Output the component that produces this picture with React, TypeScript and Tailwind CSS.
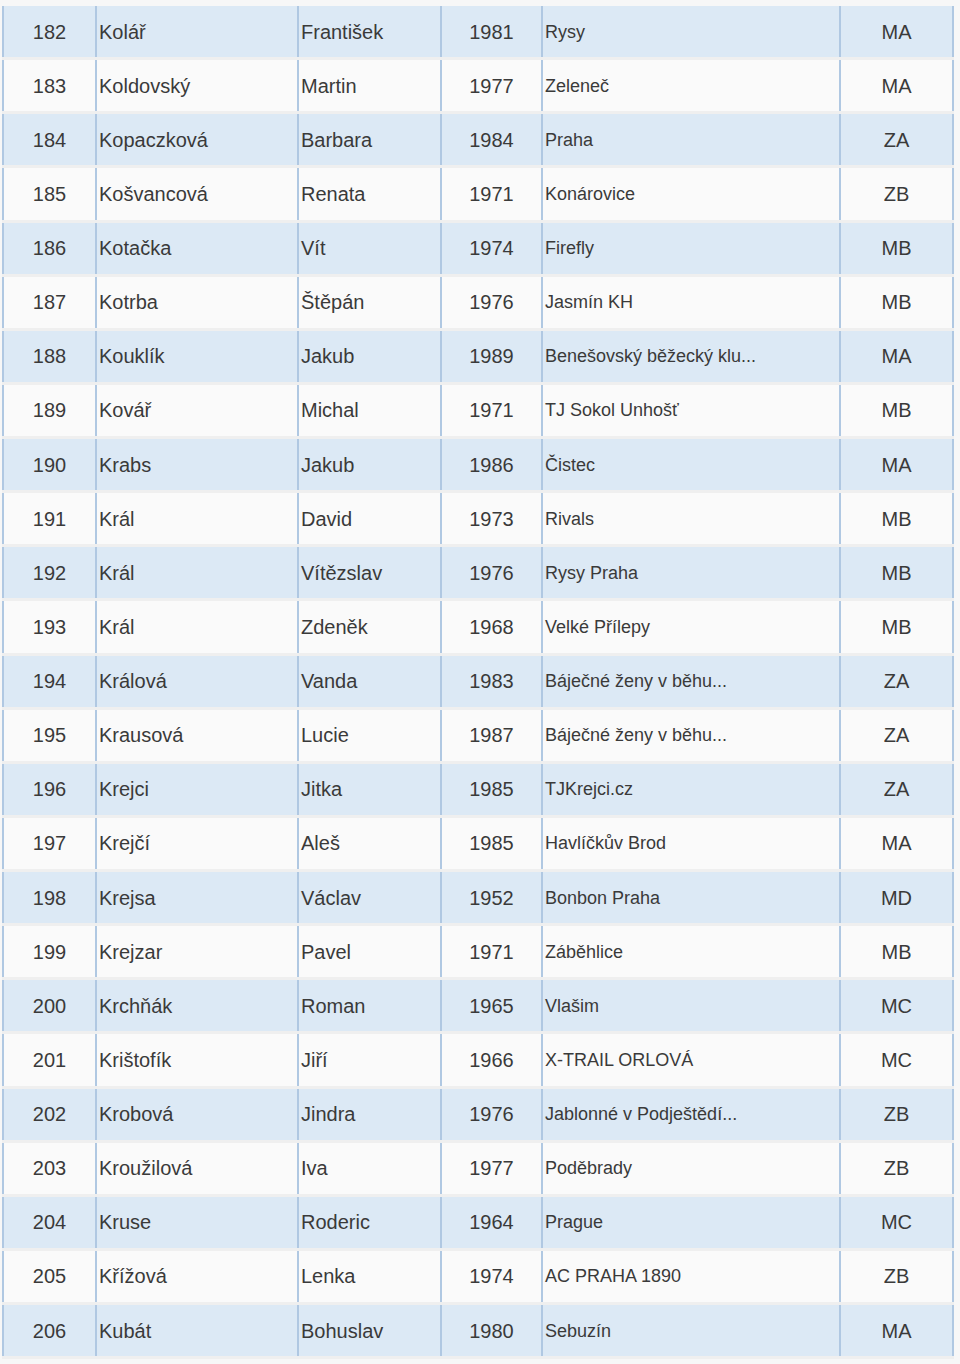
import React from 'react';

const rows: [string, string, string, string, string, string][] = [
  ['182', 'Kolář', 'František', '1981', 'Rysy', 'MA'],
  ['183', 'Koldovský', 'Martin', '1977', 'Zeleneč', 'MA'],
  ['184', 'Kopaczková', 'Barbara', '1984', 'Praha', 'ZA'],
  ['185', 'Košvancová', 'Renata', '1971', 'Konárovice', 'ZB'],
  ['186', 'Kotačka', 'Vít', '1974', 'Firefly', 'MB'],
  ['187', 'Kotrba', 'Štěpán', '1976', 'Jasmín KH', 'MB'],
  ['188', 'Kouklík', 'Jakub', '1989', 'Benešovský běžecký klu...', 'MA'],
  ['189', 'Kovář', 'Michal', '1971', 'TJ Sokol Unhošť', 'MB'],
  ['190', 'Krabs', 'Jakub', '1986', 'Čistec', 'MA'],
  ['191', 'Král', 'David', '1973', 'Rivals', 'MB'],
  ['192', 'Král', 'Vítězslav', '1976', 'Rysy Praha', 'MB'],
  ['193', 'Král', 'Zdeněk', '1968', 'Velké Přílepy', 'MB'],
  ['194', 'Králová', 'Vanda', '1983', 'Báječné ženy v běhu...', 'ZA'],
  ['195', 'Krausová', 'Lucie', '1987', 'Báječné ženy v běhu...', 'ZA'],
  ['196', 'Krejci', 'Jitka', '1985', 'TJKrejci.cz', 'ZA'],
  ['197', 'Krejčí', 'Aleš', '1985', 'Havlíčkův Brod', 'MA'],
  ['198', 'Krejsa', 'Václav', '1952', 'Bonbon Praha', 'MD'],
  ['199', 'Krejzar', 'Pavel', '1971', 'Záběhlice', 'MB'],
  ['200', 'Krchňák', 'Roman', '1965', 'Vlašim', 'MC'],
  ['201', 'Krištofík', 'Jiří', '1966', 'X-TRAIL ORLOVÁ', 'MC'],
  ['202', 'Krobová', 'Jindra', '1976', 'Jablonné v Podještědí...', 'ZB'],
  ['203', 'Kroužilová', 'Iva', '1977', 'Poděbrady', 'ZB'],
  ['204', 'Kruse', 'Roderic', '1964', 'Prague', 'MC'],
  ['205', 'Křížová', 'Lenka', '1974', 'AC PRAHA 1890', 'ZB'],
  ['206', 'Kubát', 'Bohuslav', '1980', 'Sebuzín', 'MA'],
];

export default function App() {
  return (
    <div className="w-[960px] h-[1364px] bg-[#f7f7f7] pt-[6px] text-[#3a3a3a] font-['Liberation_Sans',Arial,sans-serif]">
      <div className="flex flex-col ml-[2px] w-[952px]">
        {rows.map((r, i) => (
          <div
            key={r[0]}
            className={`flex h-[54.125px] border-b-[3px] border-[#efefef] ${i % 2 === 0 ? 'bg-[#dce9f5]' : 'bg-[#fafafa]'}`}
          >
            <div className="w-[93px] flex items-center justify-center border-l-2 border-[#b0c8e2] text-[20px]">{r[0]}</div>
            <div className="w-[202px] flex items-center pl-[2px] border-l-2 border-[#b0c8e2] text-[20px]">{r[1]}</div>
            <div className="w-[143px] flex items-center pl-[2px] border-l-2 border-[#b0c8e2] text-[20px]">{r[2]}</div>
            <div className="w-[101px] flex items-center justify-center border-l-2 border-[#b0c8e2] text-[20px]">{r[3]}</div>
            <div className="w-[298px] flex items-center pl-[2px] pt-[1px] border-l-2 border-[#b0c8e2] text-[18px]">{r[4]}</div>
            <div className="w-[115px] flex items-center justify-center border-x-2 border-[#b0c8e2] text-[20px]">{r[5]}</div>
          </div>
        ))}
      </div>
    </div>
  );
}
